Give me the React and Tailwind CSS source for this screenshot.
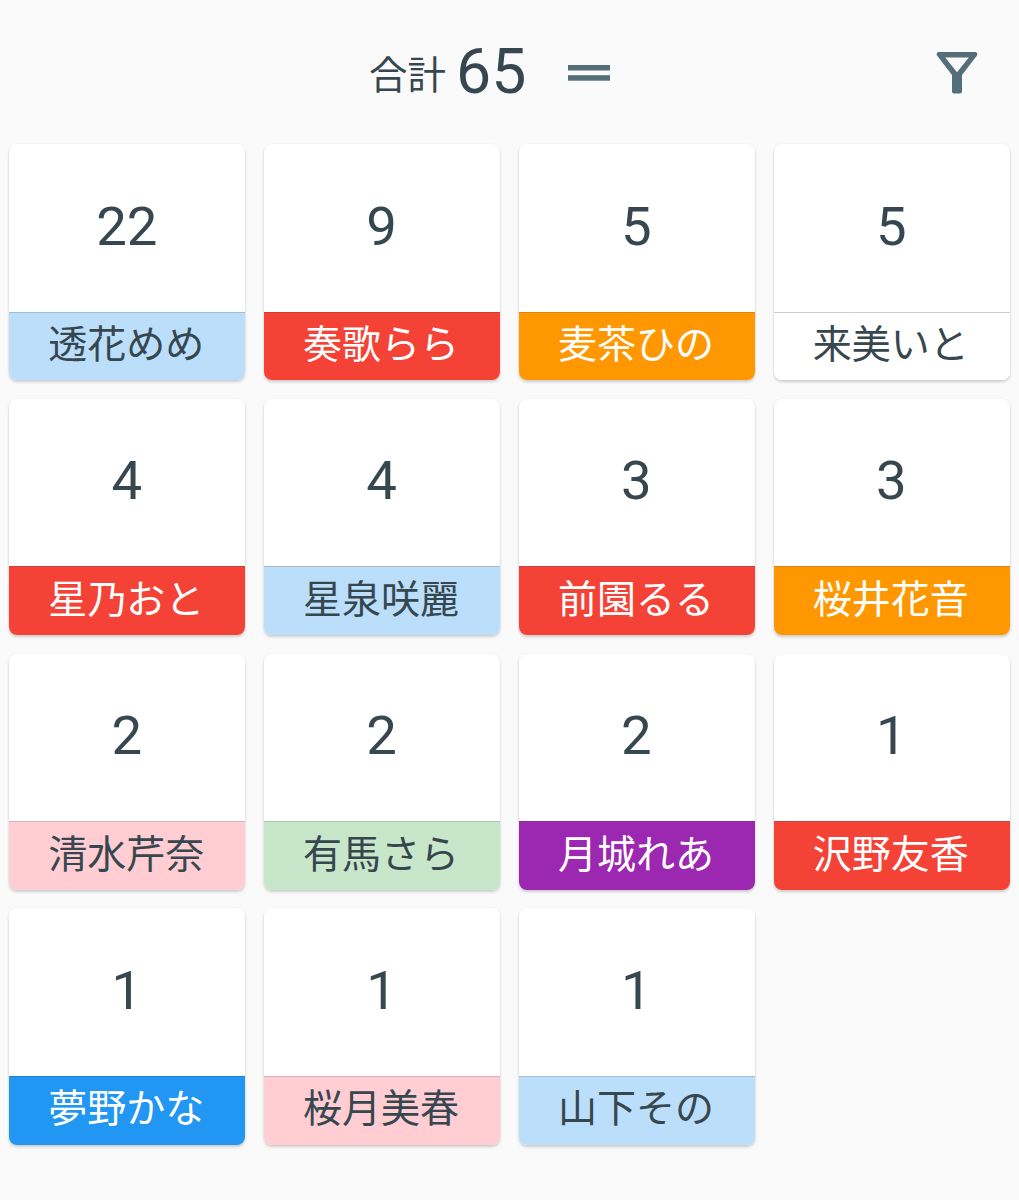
import React from 'react';

const members = [
    { name: '透花めめ', count: 22, color: 'bg-[#bbdefb] text-[#37474f]', line: 'border-[#a0bed7]' },
    { name: '奏歌らら', count: 9, color: 'bg-[#f44336] text-white', line: 'border-[#d03f35]' },
    { name: '麦茶ひの', count: 5, color: 'bg-[#ff9800] text-white', line: 'border-[#d98610]' },
    { name: '来美いと', count: 5, color: 'bg-white text-[#37474f]', line: 'border-[#c5d0d3]' },
    { name: '星乃おと', count: 4, color: 'bg-[#f44336] text-white', line: 'border-[#d03f35]' },
    { name: '星泉咲麗', count: 4, color: 'bg-[#bbdefb] text-[#37474f]', line: 'border-[#a0bed7]' },
    { name: '前園るる', count: 3, color: 'bg-[#f44336] text-white', line: 'border-[#d03f35]' },
    { name: '桜井花音', count: 3, color: 'bg-[#ff9800] text-white', line: 'border-[#d98610]' },
    { name: '清水芹奈', count: 2, color: 'bg-[#ffcdd2] text-[#37474f]', line: 'border-[#d9b2b8]' },
    { name: '有馬さら', count: 2, color: 'bg-[#c8e6c9] text-[#37474f]', line: 'border-[#abc6b0]' },
    { name: '月城れあ', count: 2, color: 'bg-[#9c27b0] text-white', line: 'border-[#8a2b9c]' },
    { name: '沢野友香', count: 1, color: 'bg-[#f44336] text-white', line: 'border-[#d03f35]' },
    { name: '夢野かな', count: 1, color: 'bg-[#2196f3] text-white', line: 'border-[#2584d0]' },
    { name: '桜月美春', count: 1, color: 'bg-[#ffcdd2] text-[#37474f]', line: 'border-[#d9b2b8]' },
    { name: '山下その', count: 1, color: 'bg-[#bbdefb] text-[#37474f]', line: 'border-[#a0bed7]' },
];

const SortIcon = () => (
    <svg width="42" height="16" viewBox="0 0 42 16" fill="#546e7a">
        <rect width="42" height="5.5" />
        <rect y="10.2" width="42" height="5.5" />
    </svg>
);

const FilterIcon = () => (
    <svg width="42" height="42" viewBox="0 0 42 42" fill="#546e7a" fillRule="evenodd">
        <path d="M3 0H39C41 0 42 2.2 40.8 3.8L26 23V39.5Q26 41.5 24 41.5H18Q16 41.5 16 39.5V23L1.2 3.8C0 2.2 1 0 3 0ZM9.2 5.5L21 20.2L32.8 5.5Z" />
    </svg>
);

const MemberCard = ({ member }) => (
    <div className="flex h-[236.2px] flex-col overflow-hidden rounded-lg bg-white shadow-[0_2px_3px_rgba(0,0,0,0.18),0_0_2px_rgba(0,0,0,0.05)]">
        <div className="flex flex-1 items-center justify-center pr-px pb-1 text-[54.5px] leading-none">
            {member.count}
        </div>
        <div className={`flex h-[68.5px] items-center justify-center border-t pr-[2px] pb-[2px] text-[39px] leading-none ${member.color} ${member.line}`}>
            {member.name}
        </div>
    </div>
);

const App = () => {
    const total = members.reduce((sum, member) => sum + member.count, 0);

    return (
        <div className="min-h-[1200px] bg-[#fafafa] font-[Roboto,'Noto_Sans_CJK_JP',sans-serif] text-[#37474f]">
            <header className="flex h-36 items-center pr-[41px] pl-[369px]">
                <div className="flex items-center gap-[10px] leading-none">
                    <span className="pt-2 text-[38.5px]">合計</span>
                    <span className="w-[70px] text-[62.5px]">{total}</span>
                </div>
                <button aria-label="並べ替え" className="ml-[42px] pt-0.5">
                    <SortIcon />
                </button>
                <button aria-label="絞り込み" className="ml-auto pt-px">
                    <FilterIcon />
                </button>
            </header>
            <main className="grid grid-cols-4 gap-[18.6px] px-[9.2px]">
                {members.map((member) => (
                    <MemberCard key={member.name} member={member} />
                ))}
            </main>
        </div>
    );
};

export default App;
